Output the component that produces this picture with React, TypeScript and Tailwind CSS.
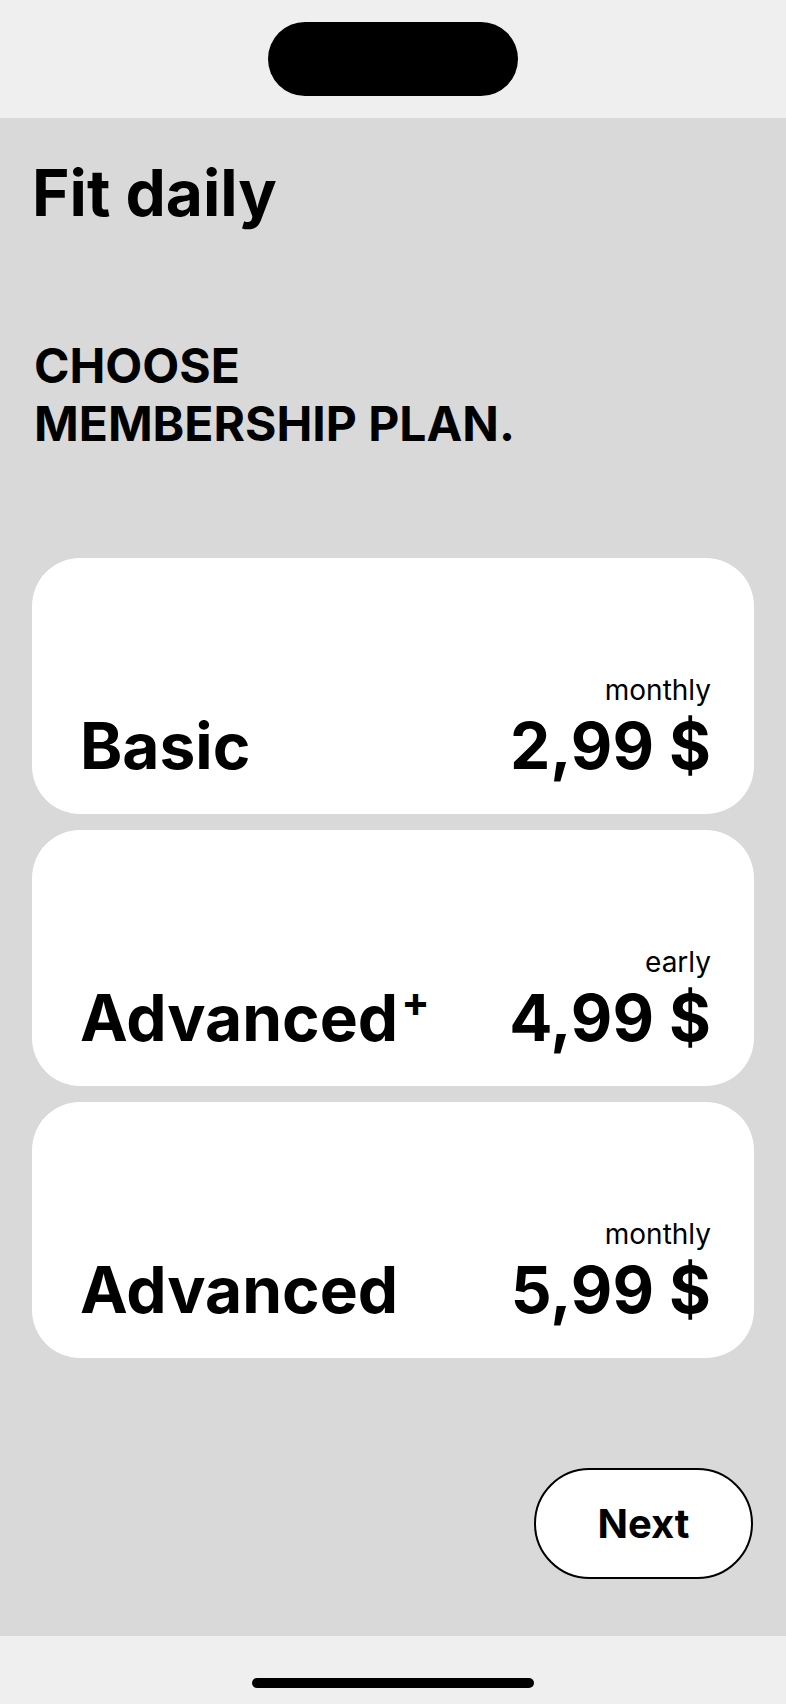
import React from 'react';

interface Plan {
  name: string;
  plus?: boolean;
  period: string;
  price: string;
}

const plans: Plan[] = [
  { name: 'Basic', period: 'monthly', price: '2,99 $' },
  { name: 'Advanced', plus: true, period: 'early', price: '4,99 $' },
  { name: 'Advanced', period: 'monthly', price: '5,99 $' },
];

const PlanCard: React.FC<{ plan: Plan }> = ({ plan }) => (
  <div className="h-[256px] rounded-[48px] bg-white pl-12 pr-[43px] pb-[36px] flex items-end justify-between">
    <div className="text-[64px] font-bold leading-none text-black">
      {plan.name}
      {plan.plus && (
        <span className="relative top-[-24px] ml-[3px] text-[42px] leading-none">+</span>
      )}
    </div>
    <div className="flex flex-col items-end">
      <span className="text-[28px] leading-none text-black mb-[10px]">{plan.period}</span>
      <span className="text-[64px] font-bold leading-none text-black">{plan.price}</span>
    </div>
  </div>
);

export default function App() {
  return (
    <div
      className="w-[786px] h-[1704px] flex flex-col bg-[#d9d9d9] text-black"
      style={{ fontFamily: 'Inter, "Noto Sans", sans-serif' }}
    >
      {/* status area */}
      <div className="h-[118px] bg-[#efefef] flex justify-center pt-[22px] shrink-0">
        <div className="w-[250px] h-[74px] rounded-full bg-black" />
      </div>

      <main className="flex-1 px-8 flex flex-col">
        <h1 className="mt-[43px] text-[64px] font-bold leading-none">Fit daily</h1>
        <h2 className="mt-[112px] pl-[2px] text-[48px] font-bold leading-[58px]">
          CHOOSE
          <br />
          MEMBERSHIP PLAN.
        </h2>

        <div className="mt-[105px] flex flex-col gap-4">
          {plans.map((p, i) => (
            <PlanCard key={i} plan={p} />
          ))}
        </div>

        <div className="mt-[110px] flex justify-end pr-px">
          <button className="w-[219px] h-[111px] rounded-full border-2 border-black bg-white text-[40px] font-bold">
            Next
          </button>
        </div>
      </main>

      {/* home bar */}
      <div className="h-[68px] bg-[#efefef] flex justify-center pt-[42px] shrink-0">
        <div className="w-[282px] h-[10px] rounded-full bg-black" />
      </div>
    </div>
  );
}
